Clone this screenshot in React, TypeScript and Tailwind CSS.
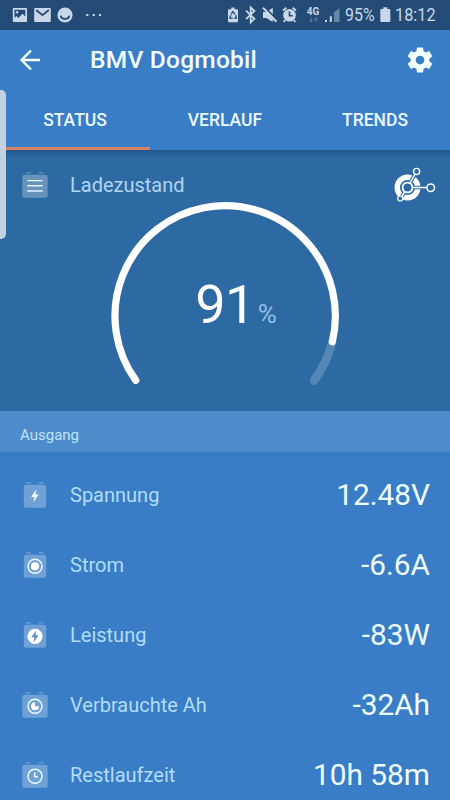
import type { ReactNode } from "react";

const BatteryIcon = ({ wide, children }: { wide?: boolean; children: ReactNode }) => (
  <svg width="26" height="26" viewBox="0 0 26 26" fill="none" className="shrink-0">
    <path d="M4 0.8h5M16.5 0.8h5" stroke="#fff" strokeOpacity="0.28" strokeWidth="1.3" />
    <rect x={wide ? 0.3 : 1.8} y="2.7" width={wide ? 25.4 : 22.4} height="23" rx="2.2" fill="#fff" fillOpacity="0.28" />
    {children}
  </svg>
);

const rows = [
  {
    label: "Spannung",
    value: "12.48V",
    icon: (
      <BatteryIcon>
        <path d="M14.4 7.3L9.2 15h3.2l-1 5.2 5.3-7.6h-3.3z" fill="#fff" />
      </BatteryIcon>
    ),
  },
  {
    label: "Strom",
    value: "-6.6A",
    icon: (
      <BatteryIcon>
        <circle cx="13" cy="14.3" r="7" stroke="#f4ffff" strokeWidth="1.4" />
        <circle cx="13" cy="14.3" r="4.1" fill="#fff" />
      </BatteryIcon>
    ),
  },
  {
    label: "Leistung",
    value: "-83W",
    icon: (
      <BatteryIcon>
        <circle cx="13" cy="14.3" r="7.6" fill="#fff" />
        <path d="M14.4 8.2L9.2 15.2h3.2l-1 5.2 5.3-7.2h-3.2z" fill="#5b91ce" />
      </BatteryIcon>
    ),
  },
  {
    label: "Verbrauchte Ah",
    value: "-32Ah",
    icon: (
      <BatteryIcon wide>
        <circle cx="13" cy="14.3" r="7" stroke="#f4ffff" strokeWidth="1.4" />
        <path d="M13 10.3v4h4a4 4 0 1 1-4-4z" fill="#fff" />
      </BatteryIcon>
    ),
  },
  {
    label: "Restlaufzeit",
    value: "10h 58m",
    icon: (
      <BatteryIcon wide>
        <circle cx="13" cy="14.3" r="7" stroke="#f4ffff" strokeWidth="1.4" />
        <path d="M12.7 10.5v4.3h3.2" stroke="#f4ffff" strokeWidth="1.4" />
      </BatteryIcon>
    ),
  },
];

const StatusBar = () => (
  <div className="flex h-[30px] items-center bg-[#234b76] text-[#c8d8e9]">
    <svg width="104" height="30" viewBox="0 0 104 30" fill="none">
      <rect x="12.8" y="8" width="14.2" height="14" rx="1" fill="#c8d8e9" />
      <path d="M14.5 9.8h10.8v6.8l-2.8-2.8-4.1 4.2-2-2-1.9 2z" fill="#234b76" />
      <circle cx="17" cy="12.3" r="1.2" fill="#c8d8e9" />
      <rect x="34.2" y="8" width="16.6" height="14" rx="1" fill="#c8d8e9" />
      <path d="M36.2 10l6.3 5.2 6.3-5.2" stroke="#234b76" strokeWidth="1.8" />
      <circle cx="65" cy="15" r="7.6" fill="#c8d8e9" />
      <path d="M60.7 15.7c.5 4.3 8.1 4.3 8.6 0" stroke="#234b76" strokeWidth="1.8" />
      <path d="M86.2 15h2.2M92.6 15h2.2M98.9 15h2.2" stroke="#c8d8e9" strokeWidth="2.2" />
    </svg>
    <svg width="73" height="30" viewBox="225 0 73 30" fill="none" className="ml-[121px]">
      <path d="M229 9.3h2.3V7.5h3.2v1.8h2.5q1 0 1 1v11q0 1-1 1h-8q-1 0-1-1v-11q0-1 1-1z" fill="#c8d8e9" />
      <path d="M231 14.3l2-2.8 2 2.8M235.6 15.3l.8 2.8h-2.2M232.8 18.1h-3l1-2.8" stroke="#234b76" strokeWidth="1.3" />
      <path d="M246 10.7l8.4 8.1-3.7 3.6V7.5l3.7 3.6-8.4 8.1" stroke="#c8d8e9" strokeWidth="1.8" />
      <path d="M263 12h3.4l6.4-4.2v14.3l-6.4-4.1H263z" fill="#c8d8e9" />
      <path d="M264.8 7.3l13.5 14.3" stroke="#234b76" strokeWidth="2" />
      <path d="M263 7.8l13.5 14" stroke="#c8d8e9" strokeWidth="2" />
      <circle cx="289.5" cy="15.3" r="6.3" fill="#c8d8e9" />
      <path d="M283 10.5l3.3-2.7M296 10.5l-3.3-2.7M285.2 20.2l-1.6 1.8M293.8 20.2l1.6 1.8" stroke="#c8d8e9" strokeWidth="1.8" />
      <path d="M289.5 11.5v4.3h3.2" stroke="#234b76" strokeWidth="1.6" />
    </svg>
    <div className="ml-2 flex h-[30px] w-[14px] flex-col items-center pt-[7px]">
      <span className="text-[10px] font-bold leading-[9px]">4G</span>
      <svg width="9" height="6" viewBox="0 0 9 6" fill="none" stroke="#6587aa" className="mt-[1px]">
        <path d="M2 .5v4M.5 3L2 4.8 3.5 3M7 5V1M5.5 2.5L7 .8l1.5 1.7" />
      </svg>
    </div>
    <svg width="15" height="30" viewBox="0 0 15 30" className="ml-[5px]">
      <path d="M0 20h2v2H0zM4.8 16.3h2V22h-2z" fill="#c8d8e9" />
      <path d="M9 12.3l5.5-4.3v14H9z" fill="#6587aa" />
    </svg>
    <span className="ml-[5px] w-[30px] origin-left scale-x-[0.86] whitespace-nowrap text-[18.5px] leading-[30px]">95%</span>
    <svg width="11" height="30" viewBox="0 0 11 30" className="ml-[5px]" fill="#c8d8e9">
      <path d="M1.3 9h2V7.3h4V9h2q1 0 1 1v11q0 1-1 1h-8q-1 0-1-1V10q0-1 1-1z" />
    </svg>
    <span className="ml-[4px] w-[43px] origin-left scale-x-[0.88] whitespace-nowrap text-[18.5px] leading-[30px]">18:12</span>
  </div>
);

const Gauge = () => (
  <svg width="240" height="200" viewBox="105 196 240 200" fill="none" strokeLinecap="round">
    <path d="M332.2 342.3A110.4 110.4 0 0 1 314 380.6" stroke="#5587b4" strokeWidth="8.6" />
    <path d="M135.8 380.4A110.2 110.2 0 1 1 332.3 341.8" stroke="#fff" strokeWidth="7.2" />
  </svg>
);

export default function App() {
  return (
    <div className="relative h-[800px] w-[450px] overflow-hidden bg-[#397dc6] font-['Roboto',sans-serif]">
      <StatusBar />
      <header className="flex h-[60px] items-center text-[#f4ffff]">
        <svg width="22" height="22" viewBox="0 0 22 22" fill="none" stroke="currentColor" strokeWidth="2.4" className="ml-[19px]">
          <path d="M21 11H2.5M12 1.5L2.5 11l9.5 9.5" />
        </svg>
        <h1 className="ml-[49px] text-[24.5px] font-medium tracking-[0.25px]">BMV Dogmobil</h1>
        <svg width="30" height="30" viewBox="0 0 24 24" fill="currentColor" className="ml-auto mr-[15px]">
          <path d="M19.43 12.98c.04-.32.07-.64.07-.98s-.03-.66-.07-.98l2.11-1.65c.19-.15.24-.42.12-.64l-2-3.46c-.12-.22-.39-.3-.61-.22l-2.49 1c-.52-.4-1.08-.73-1.69-.98l-.38-2.65C14.46 2.18 14.25 2 14 2h-4c-.25 0-.46.18-.49.42l-.38 2.65c-.61.25-1.17.59-1.69.98l-2.49-1c-.23-.09-.49 0-.61.22l-2 3.46c-.13.22-.07.49.12.64l2.11 1.65c-.04.32-.07.65-.07.98s.03.66.07.98l-2.11 1.65c-.19.15-.24.42-.12.64l2 3.46c.12.22.39.3.61.22l2.49-1c.52.4 1.08.73 1.69.98l.38 2.65c.03.24.24.42.49.42h4c.25 0 .46-.18.49-.42l.38-2.65c.61-.25 1.17-.59 1.69-.98l2.49 1c.23.09.49 0 .61-.22l2-3.46c.12-.22.07-.49-.12-.64l-2.11-1.65zM12 15.5c-1.93 0-3.5-1.57-3.5-3.5s1.57-3.5 3.5-3.5 3.5 1.57 3.5 3.5-1.57 3.5-3.5 3.5z" />
        </svg>
      </header>
      <nav className="grid h-[60px] grid-cols-3 pt-[3px] text-center text-[17.5px] font-medium leading-[54px] text-[#ecfaff]">
        <div className="border-b-[3px] border-[#d08560]">STATUS</div>
        <div>VERLAUF</div>
        <div>TRENDS</div>
      </nav>
      <section className="h-[261px] bg-[#2d6aa3] bg-linear-to-b from-[#25588f] to-[#2d6aa3] to-[9px]">
        <div className="flex h-[46px] items-center pl-[22px] pr-[14px] pt-[24px]">
          <BatteryIcon wide>
            <path d="M5.3 8.6h15.4M5.3 13.8h15.4M5.3 19h15.4" stroke="#e4f5fc" strokeWidth="1.4" />
          </BatteryIcon>
          <span className="ml-[22px] text-[20px] text-[#b0d5ee]">Ladezustand</span>
          <svg width="42" height="36" viewBox="394 167 42 36" fill="none" className="ml-auto">
            <circle cx="407.5" cy="187.5" r="10.3" stroke="#fff" strokeWidth="5.4" />
            <path d="M407.5 187.5L416.5 171.5M407.5 187.5L400.3 198.5M407.5 187.5H431" stroke="#2d6aa3" strokeWidth="3.6" />
            <path d="M407.5 187.5L416.5 171.5M407.5 187.5L400.3 198.5M407.5 187.5H431" stroke="#fff" strokeWidth="1.5" />
            <circle cx="407.5" cy="187.5" r="4.9" fill="#2d6aa3" stroke="#fff" strokeWidth="1.9" />
            <circle cx="416.6" cy="171.5" r="3.1" fill="#2d6aa3" stroke="#fff" strokeWidth="1.4" />
            <circle cx="400.2" cy="198.5" r="2.5" fill="#2d6aa3" stroke="#fff" strokeWidth="1.2" />
            <circle cx="430.7" cy="187.8" r="3.8" fill="#2d6aa3" stroke="#fff" strokeWidth="1.5" />
          </svg>
        </div>
        <div className="grid place-items-center">
          <div className="col-start-1 row-start-1">
            <Gauge />
          </div>
          <div className="col-start-1 row-start-1 flex items-baseline pl-[22px] pt-[18px]">
            <span className="text-[54px] leading-none tracking-[-0.5px] text-white">91</span>
            <span className="ml-[3px] text-[26px] leading-none text-[#94bfe6]">%</span>
          </div>
        </div>
      </section>
      <div className="flex h-[41px] items-center bg-[#4d8bca] pl-[20px] pt-[7px] text-[15px] text-[#c0e4f6]">Ausgang</div>
      <ul className="pt-[8px]">
        {rows.map((row) => (
          <li key={row.label} className="flex h-[70px] items-center pl-[22px] pr-[20px]">
            {row.icon}
            <span className="ml-[22px] text-[20px] text-[#b2dcf5]">{row.label}</span>
            <span className="ml-auto text-[29.8px] text-[#f0fdff]">{row.value}</span>
          </li>
        ))}
      </ul>
      {/* edge panel handle */}
      <div className="absolute left-0 top-[90px] h-[149px] w-[6px] rounded-r-[5px] bg-[#c3d2e3]" />
    </div>
  );
}
